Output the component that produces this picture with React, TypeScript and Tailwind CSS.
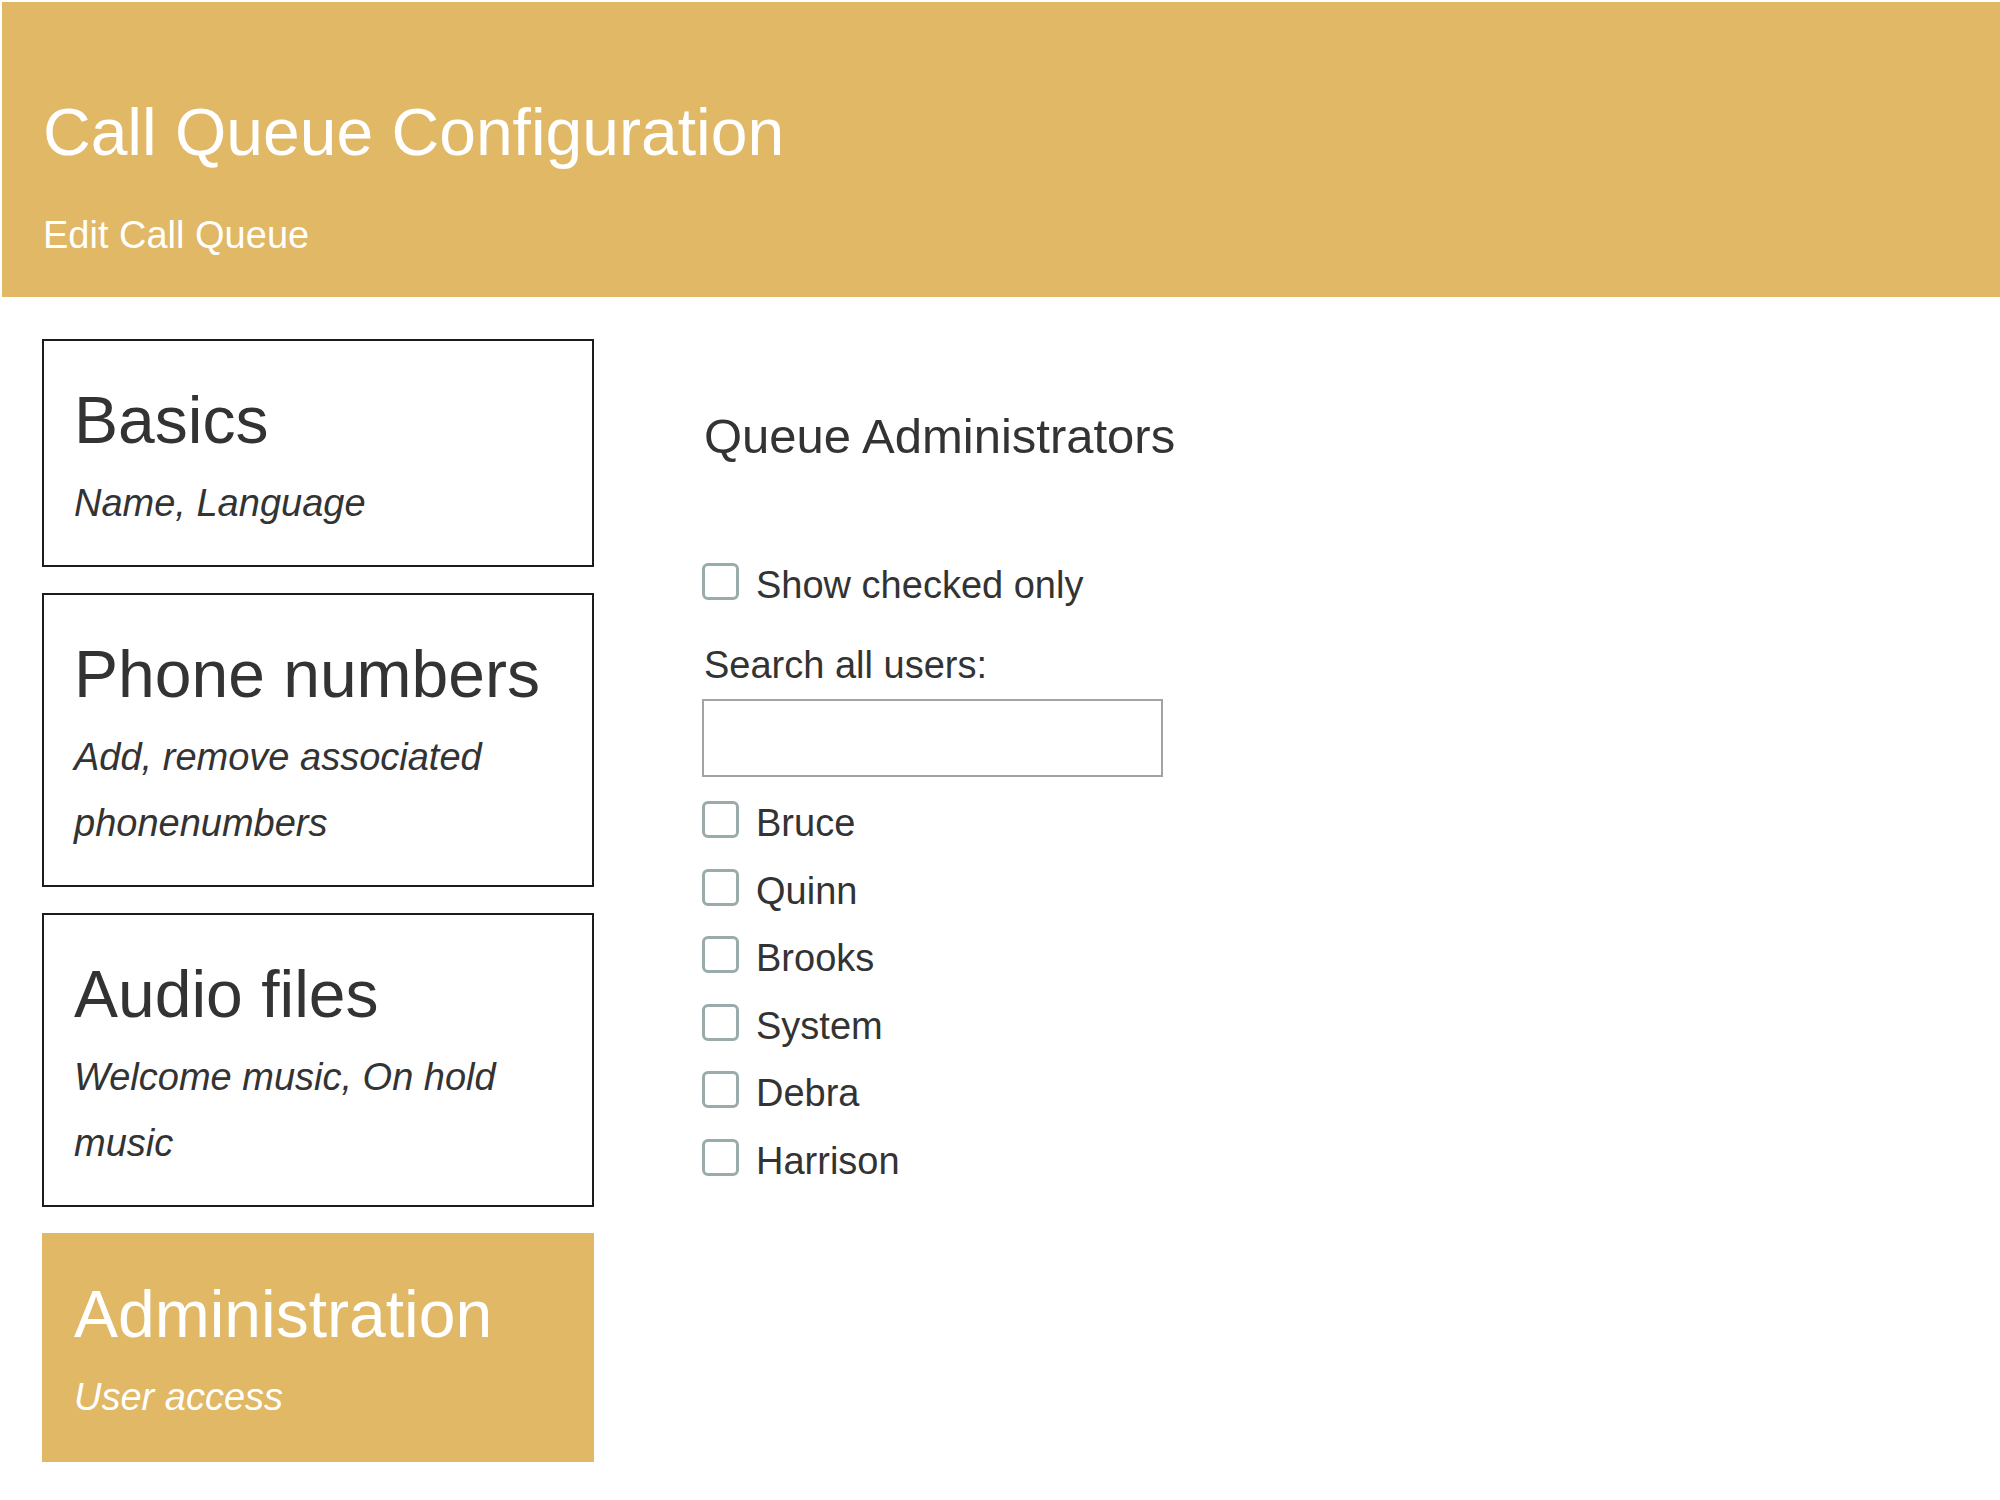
const SECTIONS = [
  { title: "Basics", sub: "Name, Language" },
  { title: "Phone numbers", sub: "Add, remove associated phonenumbers" },
  { title: "Audio files", sub: "Welcome music, On hold music" },
  { title: "Administration", sub: "User access", active: true },
];

const USERS = ["Bruce", "Quinn", "Brooks", "System", "Debra", "Harrison"];

function Box() {
  return (
    <span
      aria-hidden
      className="mt-[11px] block w-[37px] h-[37px] shrink-0 rounded-[6px] border-[3px] border-[#9aabab] bg-white"
    />
  );
}

function CheckRow({ label }: { label: string }) {
  return (
    <label className="flex items-start gap-[17px] h-[67.6px] text-[38px] leading-[67.6px] text-[#333]">
      <Box />
      <span>{label}</span>
    </label>
  );
}

export default function App() {
  return (
    <div className="min-h-screen bg-white font-['Liberation_Sans',Arial,sans-serif]">
      <header className="mt-[2px] ml-[2px] h-[295px] bg-[#e0b866] pl-[41px] pt-[94px] text-white">
        <h1 className="text-[66px] leading-[72.6px]">Call Queue Configuration</h1>
        <div className="mt-[33px] text-[38px] leading-[66px]">Edit Call Queue</div>
      </header>

      <main className="flex items-start gap-[108px] pl-[42px] pt-[42px]">
        {/* left nav cards */}
        <nav className="flex w-[552px] shrink-0 flex-col gap-[26.5px]">
          {SECTIONS.map((s) => (
            <div
              key={s.title}
              className={
                s.active
                  ? "border-2 border-[#e0b866] bg-[#e0b866] pl-[30px] pr-[40px] pt-[43px] pb-[30px] text-white"
                  : "border-2 border-[#1c1c1c] bg-white pl-[30px] pr-[40px] pt-[43px] pb-[29px] text-[#333]"
              }
            >
              <h2 className="text-[66px] leading-[72.6px]">{s.title}</h2>
              <p className="mt-[13px] text-[38px] italic leading-[66px]">{s.sub}</p>
            </div>
          ))}
        </nav>

        {/* administrators panel */}
        <section className="pt-[71px] text-[#333]">
          <h3 className="pl-[2px] text-[49px] leading-[53.9px]">Queue Administrators</h3>
          <div className="mt-[88px]">
            <CheckRow label="Show checked only" />
          </div>
          <div className="mt-[12px] pl-[2px] text-[38px] leading-[67.6px]">Search all users:</div>
          <input
            type="text"
            className="block h-[78px] w-[461px] border-2 border-[#a3a3a3] bg-white px-3 text-[38px] outline-none"
          />
          <div className="mt-[13px]">
            {USERS.map((u) => (
              <CheckRow key={u} label={u} />
            ))}
          </div>
        </section>
      </main>
    </div>
  );
}
